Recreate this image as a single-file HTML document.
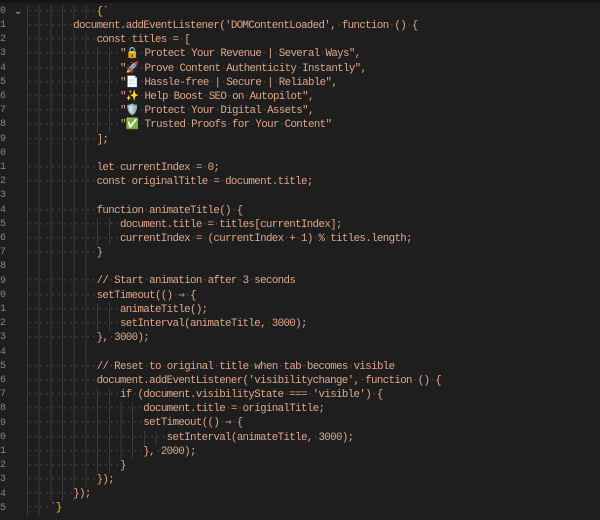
<!DOCTYPE html>
<html><head><meta charset="utf-8"><style>
html,body{margin:0;padding:0;}
body{width:600px;height:520px;background:#1e1e1e;overflow:hidden;position:relative;font-family:"Liberation Mono","DejaVu Sans Mono",monospace;}
.top{position:absolute;left:0;top:0;width:600px;height:3px;background:#141414;}
.code{position:absolute;left:26.5px;top:4.9px;}
.l{height:14.2px;line-height:14.2px;font-size:10.8px;letter-spacing:-0.64px;color:#e0a789;white-space:pre;position:relative;}
.d{color:#4a4a4a;}
.g{position:absolute;left:0;top:0;height:14.2px;background:repeating-linear-gradient(90deg,#3c3c3c 0,#3c3c3c 1px,transparent 1px,transparent 11.68px);}
.n{position:absolute;left:0;font-size:10px;color:#858585;height:14.2px;line-height:14.2px;font-family:"Liberation Mono",monospace;}
.y{color:#f0c400;}
</style></head><body>
<div class="top"></div>
<div class="code">
<div class="l"><span class="g" style="width:70px"></span><span class="d">············</span><span class="y">{</span>`</div>
<div class="l"><span class="g" style="width:47px"></span><span class="d">········</span>document.addEventListener('DOMContentLoaded',<span class="d">·</span>function<span class="d">·</span>()<span class="d">·</span>{</div>
<div class="l"><span class="g" style="width:70px"></span><span class="d">············</span>const<span class="d">·</span>titles<span class="d">·</span>=<span class="d">·</span>[</div>
<div class="l"><span class="g" style="width:93px"></span><span class="d">················</span>"🔒<span class="d">·</span>Protect<span class="d">·</span>Your<span class="d">·</span>Revenue<span class="d">·</span>|<span class="d">·</span>Several<span class="d">·</span>Ways",</div>
<div class="l"><span class="g" style="width:93px"></span><span class="d">················</span>"🚀<span class="d">·</span>Prove<span class="d">·</span>Content<span class="d">·</span>Authenticity<span class="d">·</span>Instantly",</div>
<div class="l"><span class="g" style="width:93px"></span><span class="d">················</span>"📄<span class="d">·</span>Hassle-free<span class="d">·</span>|<span class="d">·</span>Secure<span class="d">·</span>|<span class="d">·</span>Reliable",</div>
<div class="l"><span class="g" style="width:93px"></span><span class="d">················</span>"✨<span class="d">·</span>Help<span class="d">·</span>Boost<span class="d">·</span>SEO<span class="d">·</span>on<span class="d">·</span>Autopilot",</div>
<div class="l"><span class="g" style="width:93px"></span><span class="d">················</span>"🛡️<span class="d">·</span>Protect<span class="d">·</span>Your<span class="d">·</span>Digital<span class="d">·</span>Assets",</div>
<div class="l"><span class="g" style="width:93px"></span><span class="d">················</span>"✅<span class="d">·</span>Trusted<span class="d">·</span>Proofs<span class="d">·</span>for<span class="d">·</span>Your<span class="d">·</span>Content"</div>
<div class="l"><span class="g" style="width:70px"></span><span class="d">············</span>];</div>
<div class="l"><span class="g" style="width:70px"></span> </div>
<div class="l"><span class="g" style="width:70px"></span><span class="d">············</span>let<span class="d">·</span>currentIndex<span class="d">·</span>=<span class="d">·</span>0;</div>
<div class="l"><span class="g" style="width:70px"></span><span class="d">············</span>const<span class="d">·</span>originalTitle<span class="d">·</span>=<span class="d">·</span>document.title;</div>
<div class="l"><span class="g" style="width:70px"></span> </div>
<div class="l"><span class="g" style="width:70px"></span><span class="d">············</span>function<span class="d">·</span>animateTitle()<span class="d">·</span>{</div>
<div class="l"><span class="g" style="width:93px"></span><span class="d">················</span>document.title<span class="d">·</span>=<span class="d">·</span>titles[currentIndex];</div>
<div class="l"><span class="g" style="width:93px"></span><span class="d">················</span>currentIndex<span class="d">·</span>=<span class="d">·</span>(currentIndex<span class="d">·</span>+<span class="d">·</span>1)<span class="d">·</span>%<span class="d">·</span>titles.length;</div>
<div class="l"><span class="g" style="width:70px"></span><span class="d">············</span>}</div>
<div class="l"><span class="g" style="width:70px"></span> </div>
<div class="l"><span class="g" style="width:70px"></span><span class="d">············</span>//<span class="d">·</span>Start<span class="d">·</span>animation<span class="d">·</span>after<span class="d">·</span>3<span class="d">·</span>seconds</div>
<div class="l"><span class="g" style="width:70px"></span><span class="d">············</span>setTimeout(()<span class="d">·</span>⇒<span class="d">·</span>{</div>
<div class="l"><span class="g" style="width:93px"></span><span class="d">················</span>animateTitle();</div>
<div class="l"><span class="g" style="width:93px"></span><span class="d">················</span>setInterval(animateTitle,<span class="d">·</span>3000);</div>
<div class="l"><span class="g" style="width:70px"></span><span class="d">············</span>},<span class="d">·</span>3000);</div>
<div class="l"><span class="g" style="width:70px"></span> </div>
<div class="l"><span class="g" style="width:70px"></span><span class="d">············</span>//<span class="d">·</span>Reset<span class="d">·</span>to<span class="d">·</span>original<span class="d">·</span>title<span class="d">·</span>when<span class="d">·</span>tab<span class="d">·</span>becomes<span class="d">·</span>visible</div>
<div class="l"><span class="g" style="width:70px"></span><span class="d">············</span>document.addEventListener('visibilitychange',<span class="d">·</span>function<span class="d">·</span>()<span class="d">·</span>{</div>
<div class="l"><span class="g" style="width:93px"></span><span class="d">················</span>if<span class="d">·</span>(document.visibilityState<span class="d">·</span>===<span class="d">·</span>'visible')<span class="d">·</span>{</div>
<div class="l"><span class="g" style="width:117px"></span><span class="d">····················</span>document.title<span class="d">·</span>=<span class="d">·</span>originalTitle;</div>
<div class="l"><span class="g" style="width:117px"></span><span class="d">····················</span>setTimeout(()<span class="d">·</span>⇒<span class="d">·</span>{</div>
<div class="l"><span class="g" style="width:140px"></span><span class="d">························</span>setInterval(animateTitle,<span class="d">·</span>3000);</div>
<div class="l"><span class="g" style="width:117px"></span><span class="d">····················</span>},<span class="d">·</span>2000);</div>
<div class="l"><span class="g" style="width:93px"></span><span class="d">················</span>}</div>
<div class="l"><span class="g" style="width:70px"></span><span class="d">············</span>});</div>
<div class="l"><span class="g" style="width:47px"></span><span class="d">········</span>});</div>
<div class="l"><span class="g" style="width:23px"></span><span class="d">····</span>`<span class="y">}</span></div>
</div>
<div style="position:absolute;left:-6px;top:4.9px;">
<div class="n" style="top:0">10</div><div class="n" style="top:14.2px">11</div><div class="n" style="top:28.4px">12</div><div class="n" style="top:42.6px">13</div><div class="n" style="top:56.8px">14</div><div class="n" style="top:71px">15</div><div class="n" style="top:85.2px">16</div><div class="n" style="top:99.4px">17</div><div class="n" style="top:113.6px">18</div><div class="n" style="top:127.8px">19</div><div class="n" style="top:142px">20</div><div class="n" style="top:156.2px">21</div><div class="n" style="top:170.4px">22</div><div class="n" style="top:184.6px">23</div><div class="n" style="top:198.8px">24</div><div class="n" style="top:213px">25</div><div class="n" style="top:227.2px">26</div><div class="n" style="top:241.4px">27</div><div class="n" style="top:255.6px">28</div><div class="n" style="top:269.8px">29</div><div class="n" style="top:284px">30</div><div class="n" style="top:298.2px">31</div><div class="n" style="top:312.4px">32</div><div class="n" style="top:326.6px">33</div><div class="n" style="top:340.8px">34</div><div class="n" style="top:355px">35</div><div class="n" style="top:369.2px">36</div><div class="n" style="top:383.4px">37</div><div class="n" style="top:397.6px">38</div><div class="n" style="top:411.8px">39</div><div class="n" style="top:426px">40</div><div class="n" style="top:440.2px">41</div><div class="n" style="top:454.4px">42</div><div class="n" style="top:468.6px">43</div><div class="n" style="top:482.8px">44</div><div class="n" style="top:497px">45</div>
</div>
<div style="position:absolute;left:14px;top:6px;color:#aaa;font-size:10px;font-family:'DejaVu Sans',sans-serif;">⌄</div>
</body></html>
